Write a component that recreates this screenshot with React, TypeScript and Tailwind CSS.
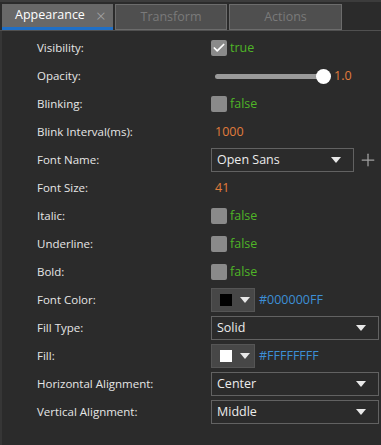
import { Check, Plus } from 'lucide-react';

const font = { fontFamily: '"Open Sans", "Noto Sans", sans-serif' };

function Caret() {
  return (
    <svg width="10" height="7" viewBox="0 0 10 7" className="shrink-0">
      <path d="M0 0 L10 0 L5 6 Z" fill="#e8e8e8" />
    </svg>
  );
}

function CheckBox({ checked }: { checked: boolean }) {
  return (
    <div className="flex items-center gap-[3px]">
      <div className="w-[16px] h-[16px] rounded-[2px] bg-[#8a8a8a] flex items-center justify-center">
        {checked && <Check size={14} strokeWidth={3} className="text-white" />}
      </div>
      <span className="text-[#4fb527]">{checked ? 'true' : 'false'}</span>
    </div>
  );
}

function Dropdown({ value, wide }: { value: string; wide?: boolean }) {
  return (
    <div
      className={`h-[24px] border border-[#626262] flex items-center justify-between pl-[5px] pr-[12px] text-[#ececec] ${
        wide ? 'w-[168px]' : 'w-[143px]'
      }`}
    >
      <span>{value}</span>
      <Caret />
    </div>
  );
}

function ColorPick({ color, hex }: { color: string; hex: string }) {
  return (
    <div className="flex items-center gap-[4px]">
      <div className="w-[44px] h-[24px] bg-[#474747] border border-[#555] flex items-center pl-[8px] gap-[8px]">
        <div className="w-[12px] h-[12px]" style={{ backgroundColor: color }} />
        <Caret />
      </div>
      <span className="text-[#3d8fd6]">{hex}</span>
    </div>
  );
}

function Row({ label, children }: { label: string; children: React.ReactNode }) {
  return (
    <div className="h-[28px] flex items-center">
      <div className="w-[209px] shrink-0 pl-[35px] text-[#e6e6e6]">{label}</div>
      <div className="flex items-center text-[12.5px]">{children}</div>
    </div>
  );
}

export default function App() {
  return (
    <div className="w-[381px] h-[445px] bg-[#2b2b2b] overflow-hidden text-[11.5px]" style={font}>
      <div className="h-[2px] bg-[#3c3c3c]" />
      {/* tabs */}
      <div className="h-[29px] flex items-end pl-[2px] gap-[2px] border-b border-[#505050] pt-[2px]">
        <div className="w-[111px] h-full bg-[#686868] flex flex-col">
          <div className="flex-1 flex items-center pl-[13px] gap-[11px] text-white text-[12.5px]">
            <span>Appearance</span>
            <span className="text-[#a8a8a8] text-[17px] font-light leading-none">×</span>
          </div>
          <div className="h-[3px] bg-[#1f6fc6]" />
        </div>
        <div className="w-[112px] h-[26px] bg-[#4f4f4f] border border-[#6c6c6c] flex items-center justify-center text-[#7a7a7a] text-[12.5px]">
          Transform
        </div>
        <div className="w-[113px] h-[26px] bg-[#4f4f4f] border border-[#6c6c6c] flex items-center justify-center text-[#7a7a7a] text-[12.5px]">
          Actions
        </div>
      </div>
      {/* content */}
      <div className="border-l-[2px] border-[#363636] h-full pt-[3px]">
        <Row label="Visibility:">
          <CheckBox checked />
        </Row>
        <Row label="Opacity:">
          <div className="flex items-center pl-[4px]">
            <div className="w-[108px] h-[5px] rounded-full bg-[#9a9a9a]" />
            <div className="w-[15px] h-[15px] rounded-full bg-white -ml-[7px]" />
            <span className="text-[#e07c3c] ml-[3px]">1.0</span>
          </div>
        </Row>
        <Row label="Blinking:">
          <CheckBox checked={false} />
        </Row>
        <Row label="Blink Interval(ms):">
          <span className="text-[#e07c3c] pl-[4px]">1000</span>
        </Row>
        <Row label="Font Name:">
          <Dropdown value="Open Sans" />
          <Plus size={20} strokeWidth={1.5} className="text-[#a0a0a0] ml-[4px]" />
        </Row>
        <Row label="Font Size:">
          <span className="text-[#e07c3c] pl-[4px]">41</span>
        </Row>
        <Row label="Italic:">
          <CheckBox checked={false} />
        </Row>
        <Row label="Underline:">
          <CheckBox checked={false} />
        </Row>
        <Row label="Bold:">
          <CheckBox checked={false} />
        </Row>
        <Row label="Font Color:">
          <ColorPick color="#000000" hex="#000000FF" />
        </Row>
        <Row label="Fill Type:">
          <Dropdown value="Solid" wide />
        </Row>
        <Row label="Fill:">
          <ColorPick color="#ffffff" hex="#FFFFFFFF" />
        </Row>
        <Row label="Horizontal Alignment:">
          <Dropdown value="Center" wide />
        </Row>
        <Row label="Vertical Alignment:">
          <Dropdown value="Middle" wide />
        </Row>
      </div>
    </div>
  );
}
